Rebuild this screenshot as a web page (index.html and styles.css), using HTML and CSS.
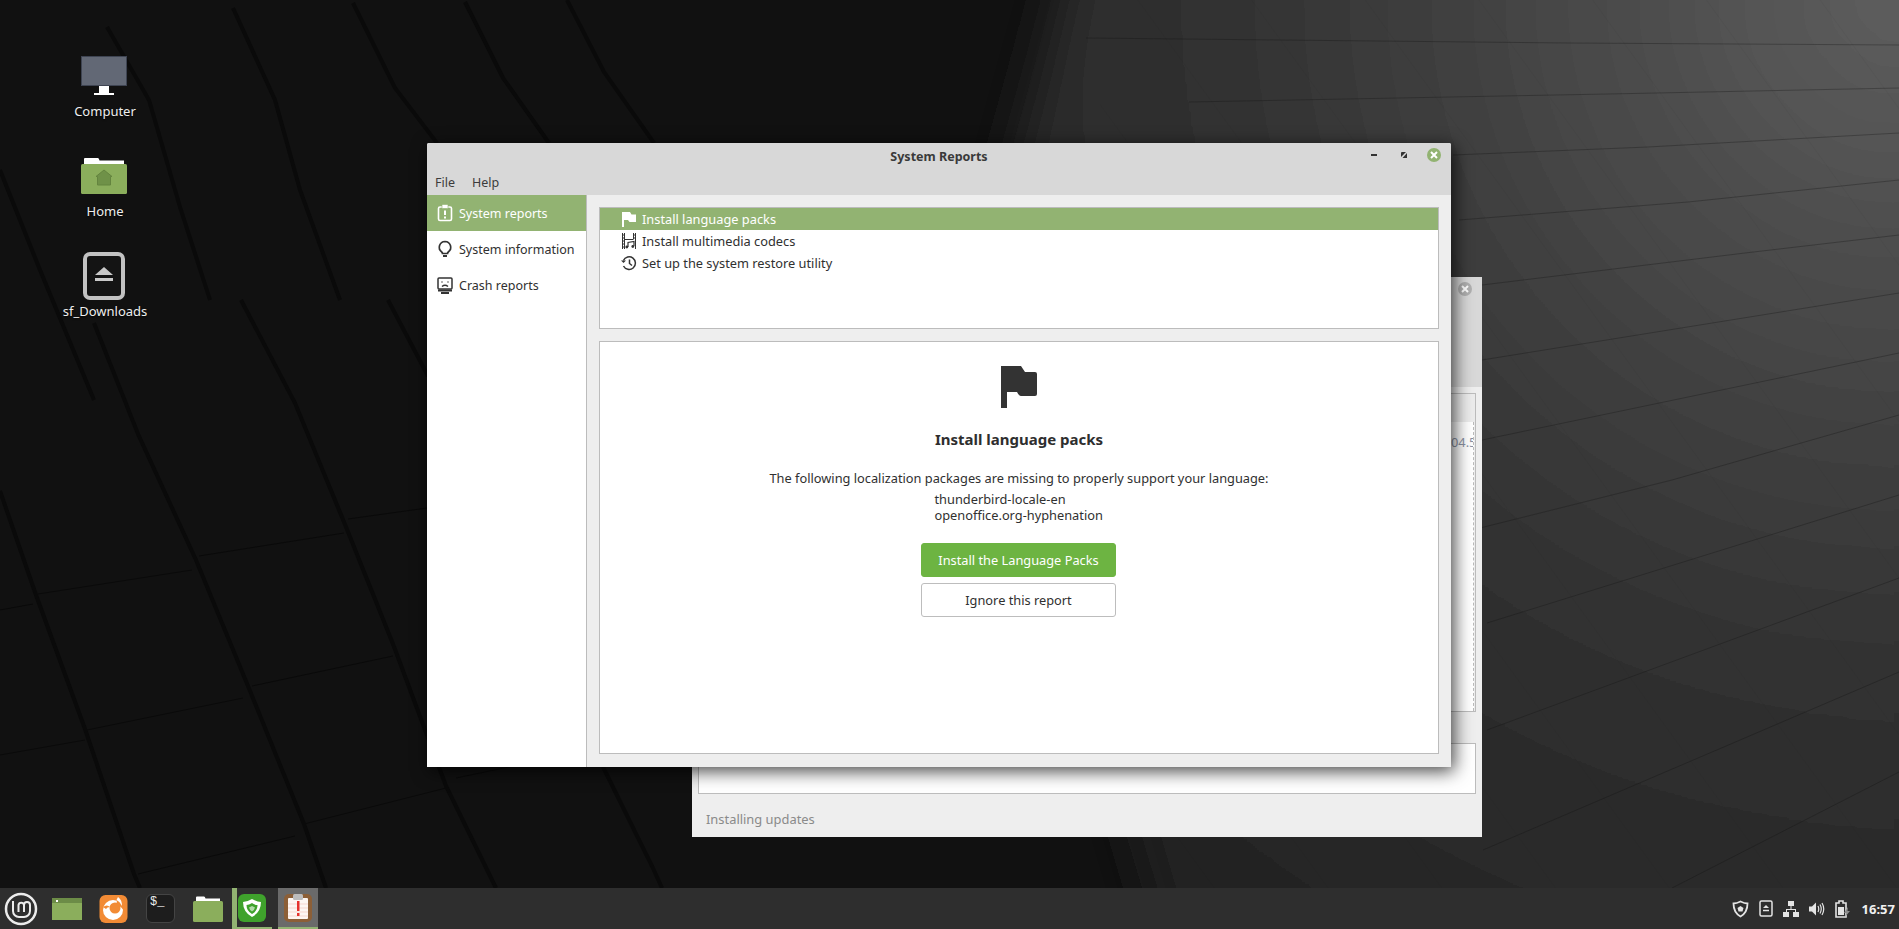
FILE: index.html
```html
<!DOCTYPE html>
<html lang="en">
<head>
  <meta charset="UTF-8" />
  <meta name="viewport" content="width=device-width, initial-scale=1.0" />
  <title>System Reports</title>
  <link rel="stylesheet" href="styles.css">
</head>
<body>
  <div class="desktop">
    <!-- wallpaper -->
    <svg class="wallpaper" viewBox="0 0 1899 929" aria-hidden="true">
      <defs>
        <radialGradient id="glow" gradientUnits="userSpaceOnUse" cx="1899" cy="0" r="1400">
          <stop offset="0" stop-color="#5e5e5e" />
          <stop offset="0.35" stop-color="#3d3d3d" />
          <stop offset="0.5" stop-color="#303030" />
          <stop offset="0.68" stop-color="#292929" />
          <stop offset="1" stop-color="#171717" />
        </radialGradient>
        <filter id="soft"><feGaussianBlur stdDeviation="24" /></filter>
        <pattern id="tiles" width="92" height="92" patternUnits="userSpaceOnUse" patternTransform="rotate(-36)">
          <line x1="0" y1="0" x2="0" y2="92" stroke="#000" stroke-opacity="0.07" />
        </pattern>
      </defs>
      <polygon points="1075,-60 1960,-60 1960,990 1180,990 975,300" fill="url(#glow)" filter="url(#soft)" />
      <rect x="1100" y="0" width="799" height="889" fill="url(#tiles)" />
      <g class="seams">
        <polyline points="1086,38 1568,43 1899,45" />
        <polyline points="1189,102 1608,94 1899,88" />
        <polyline points="1453,155 1648,147 1899,133" />
        <polyline points="1459,220 1688,202 1899,180" />
        <polyline points="1482,285 1745,253 1899,235" />
        <polyline points="1482,360 1899,293" />
        <polyline points="1482,440 1899,353" />
        <polyline points="1480,528 1672,480 1899,415" />
        <polyline points="1487,623 1899,495" />
        <polyline points="1487,730 1899,578" />
        <polyline points="1483,850 1899,672" />
        <polyline points="1672,888 1899,772" />
      </g>
      <g class="gaps">
        <polyline points="94,323 138,434 196,560 248,686 304,824 326,888" />
        <polyline points="241,300 295,403 344,522 393,644 446,786 496,888" />
        <polyline points="0,491 36,595 85,729 134,874 140,888" />
        <polyline points="388,300 428,376" />
        <polyline points="603,767 652,866 662,888" />
        <polyline points="107,27 149,100 180,207 210,300" />
        <polyline points="233,8 275,100 300,190 340,300" />
        <polyline points="353,3 395,88 437,143" />
        <polyline points="465,2 503,78 549,143" />
        <polyline points="567,0 604,72 654,143" />
        <polyline points="0,170 40,270 94,400" />
      </g>
      <g class="cracks">
        <polyline points="0,610 33,604" />
        <polyline points="38,594 192,570" />
        <polyline points="199,556 344,533" />
        <polyline points="348,519 427,508" />
        <polyline points="0,755 85,740" />
        <polyline points="87,730 243,698" />
        <polyline points="252,686 393,656" />
        <polyline points="304,824 446,788" />
        <polyline points="138,874 295,836" />
        <polyline points="456,778 600,748" />
      </g>
    </svg>

    <!-- desktop icons -->
    <div class="desktop-icons">
      <div class="desktop-icon">
        <svg class="icon-big" width="46" height="40" viewBox="0 0 46 40">
          <rect x="0.5" y="0.5" width="45" height="29" fill="#626875" stroke="#3e4452" />
          <rect x="18" y="30" width="10" height="7" fill="#fff" />
          <rect x="13" y="37" width="20" height="2" fill="#fff" />
        </svg>
        <span>Computer</span>
      </div>
      <div class="desktop-icon">
        <svg class="icon-big" width="46" height="38" viewBox="0 0 46 38">
          <path d="M3 6V2q0-1 1-1h13q1 0 1.500 2.500H43v4H3z" fill="#fff" />
          <rect x="0" y="7" width="46" height="30" rx="1.500" fill="#8bae5c" />
          <path d="M23 13l8 6.500h-1.500V28h-13v-8.500H15z" fill="#6f9148" stroke="#64843f" />
        </svg>
        <span>Home</span>
      </div>
      <div class="desktop-icon">
        <svg class="icon-big" width="42" height="48" viewBox="0 0 42 48">
          <rect x="2" y="2" width="38" height="44" rx="5" fill="#141414" stroke="#c2c2c2" stroke-width="4" />
          <path d="M21 15l9 8H12z" fill="#c9c9c9" />
          <rect x="12" y="26" width="18" height="3" fill="#c9c9c9" />
        </svg>
        <span>sf_Downloads</span>
      </div>
    </div>

    <!-- window behind -->
    <div class="window back-window">
      <div class="back-head">
        <span class="win-close grey">
          <svg width="8" height="8" viewBox="0 0 8 8"><path d="M1 1l6 6M7 1L1 7" stroke="#fff" stroke-width="2" /></svg>
        </span>
      </div>
      <div class="back-body">
        <div class="log-frame">
          <div class="log-top"></div>
          <div class="log-text">04.5</div>
        </div>
        <div class="term-frame"></div>
        <div class="back-status">Installing updates</div>
      </div>
    </div>

    <!-- system reports window -->
    <div class="window main-window">
      <div class="win-head">
        <div class="titlebar">
          <div class="title">System Reports</div>
          <div class="win-controls">
            <svg width="14" height="14" viewBox="0 0 14 14"><rect x="4" y="6" width="6" height="2" fill="#333" /></svg>
            <svg width="14" height="14" viewBox="0 0 14 14"><path d="M4 9V4.500L5 4h4zM10 5v5H5.500z" fill="#333" /><path d="M3.500 10.500l7-7" stroke="#d8d8d8" /></svg>
            <span class="win-close">
              <svg width="8" height="8" viewBox="0 0 8 8"><path d="M1 1l6 6M7 1L1 7" stroke="#fff" stroke-width="2" /></svg>
            </span>
          </div>
        </div>
        <div class="menubar">
          <span>File</span>
          <span>Help</span>
        </div>
      </div>
      <div class="win-body">
        <div class="sidebar">
          <div class="side-item selected">
            <svg width="16" height="18" viewBox="0 0 16 18" fill="none" stroke="#fff" stroke-width="1.600">
              <rect x="1.500" y="3" width="13" height="13.500" rx="1.500" />
              <rect x="5" y="0.500" width="6" height="4" fill="#fff" stroke="#92b372" stroke-width="0.600" />
              <path d="M8 6.500v4.500M8 12.500v2" stroke-width="2" />
            </svg>
            <span>System reports</span>
          </div>
          <div class="side-item">
            <svg width="16" height="18" viewBox="0 0 16 18" fill="none" stroke="#333" stroke-width="1.700">
              <path d="M8 1.500a5.800 5.800 0 0 1 3.300 10.500c-.6.500-.8 1-.8 1.500h-5c0-.5-.2-1-.8-1.500A5.800 5.800 0 0 1 8 1.500z" />
              <path d="M6 16h4" stroke-width="2" />
            </svg>
            <span>System information</span>
          </div>
          <div class="side-item">
            <svg width="16" height="18" viewBox="0 0 16 18" fill="none" stroke="#333" stroke-width="1.500">
              <rect x="1" y="2" width="14" height="11" rx="1" />
              <path d="M4 17h8" stroke-width="2" />
              <path d="M1 14.500h14" stroke-width="2" />
              <path d="M5 5.500v1M11 5.500v1M5 10.500q3-2.500 6 0" />
            </svg>
            <span>Crash reports</span>
          </div>
        </div>
        <div class="content">
          <div class="report-list">
            <div class="report-row selected">
              <svg width="16" height="16" viewBox="0 0 16 16"><path d="M1 1h8l1.500 2.500H15V11H8.500L7 9H3v7H1z" fill="#fff" /></svg>
              <span>Install language packs</span>
            </div>
            <div class="report-row">
              <svg width="16" height="18" viewBox="0 0 16 18" fill="none" stroke="#333">
                <path d="M1.500 1v16M14.500 1v16M1.500 3h2M1.500 6h2M1.500 9h2M1.500 12h2M1.500 15h2M12.500 3h2M12.500 6h2M3.500 1v16M12.500 1v6M3.500 7.500h9" />
                <path d="M7 15V10.500l6-1V14" stroke-width="1.200" />
                <circle cx="5.800" cy="15" r="1.400" fill="#333" stroke="none" />
                <circle cx="11.800" cy="14.500" r="1.400" fill="#333" stroke="none" />
              </svg>
              <span>Install multimedia codecs</span>
            </div>
            <div class="report-row">
              <svg width="16" height="16" viewBox="0 0 16 16" fill="none" stroke="#333" stroke-width="1.500">
                <path d="M2.400 5.500A6.300 6.300 0 1 1 2.500 11" />
                <path d="M0 5.500l2.500 2.500L5 5.500" fill="#333" stroke="none" />
                <path d="M8.500 4.500v4l2.500 2" />
              </svg>
              <span>Set up the system restore utility</span>
            </div>
          </div>
          <div class="report-panel">
            <svg class="report-flag" width="36" height="42" viewBox="0 0 36 42">
              <path d="M0 0h20l4 6h10q2 0 2 2v20q0 2-2 2H20q-2 0-4-4H6v16H0z" fill="#333" />
            </svg>
            <h2>Install language packs</h2>
            <p>The following localization packages are missing to properly support your language:</p>
            <div class="pkg-list">thunderbird-locale-en<br>openoffice.org-hyphenation</div>
            <button class="btn btn-green">Install the Language Packs</button>
            <button class="btn">Ignore this report</button>
          </div>
        </div>
      </div>
    </div>

    <!-- panel -->
    <div class="panel">
      <svg class="menu-logo" width="34" height="34" viewBox="0 0 34 34" fill="none" stroke="#ececec">
        <circle cx="17" cy="17" r="15" stroke-width="2.500" />
        <path d="M9 9v10a6 6 0 0 0 6 6h5a6 6 0 0 0 6-6v-6a3 3 0 0 0-6 0v7M14.500 20v-7a2.800 2.800 0 0 1 5.500 0" stroke-width="2" />
      </svg>
      <div class="launcher">
        <svg width="30" height="22" viewBox="0 0 30 22">
          <rect width="30" height="22" fill="#8bae5c" />
          <rect width="30" height="5" fill="#6c8c47" />
          <rect x="4" y="2" width="2" height="2" fill="#fff" />
        </svg>
      </div>
      <div class="launcher">
        <svg width="29" height="30" viewBox="0 0 29 30">
          <rect x="0.500" y="1" width="28" height="28" rx="6" fill="#f28b35" />
          <circle cx="14" cy="16" r="10" fill="#fff" />
          <circle cx="16" cy="14" r="5.500" fill="#f28b35" />
          <path d="M18 5q7 3 6.500 11-4-5-7-5z" fill="#f28b35" />
          <path d="M19 3q5 4 3.500 9-1-4-5-6z" fill="#fff" />
          <path d="M4 13q4-3 7 0-3 0-4 2z" fill="#f28b35" />
        </svg>
      </div>
      <div class="launcher">
        <div class="term-icon">$_</div>
      </div>
      <div class="launcher">
        <svg width="30" height="26" viewBox="0 0 30 26">
          <path d="M3 5V1.500q0-1 1-1h7q1 0 1.500 2H27v4H3z" fill="#fff" />
          <rect y="5" width="30" height="21" rx="1.500" fill="#8bae5c" />
        </svg>
      </div>
      <div class="launcher running">
        <svg width="28" height="28" viewBox="0 0 28 28">
          <rect width="28" height="28" rx="6" fill="#3fa22c" />
          <path d="M14 5q5 3 9 3 0 10-9 15Q5 18 5 8q4 0 9-3z" fill="#fff" />
          <path d="M14 9q3 2 5.500 2 0 6-5.500 9-5.500-3-5.500-9 2.500 0 5.500-2z" fill="#3fa22c" />
          <path d="M14 12l3 1.500q-.5 2.500-3 4-2.500-1.500-3-4z" fill="#fff" opacity="0.6" />
        </svg>
      </div>
      <div class="launcher running active">
        <svg width="28" height="30" viewBox="0 0 28 30">
          <rect y="1" width="28" height="28" rx="5" fill="#8c5f37" />
          <rect x="4" y="5" width="20" height="21" rx="1" fill="#fdf6f2" />
          <rect x="9" y="1" width="10" height="6" rx="1.500" fill="#bdbdbd" />
          <path d="M4 11h20M4 15h20M4 19h20M4 23h20" stroke="#f2c9c2" stroke-width="0.700" />
          <rect x="13" y="8" width="2.500" height="10" fill="#e5322d" />
          <rect x="13" y="20" width="2.500" height="3" fill="#e5322d" />
        </svg>
      </div>
      <div class="tray">
        <svg width="17" height="18" viewBox="0 0 17 18" fill="none" stroke="#e4e4e4" stroke-width="1.800">
          <path d="M8.500 1.500q4 2 7 2 0 9-7 13-7-4-7-13 3 0 7-2z" />
          <path d="M8.500 6l3 2-1 3.500h-4l-1-3.500z" fill="#e4e4e4" stroke="none" />
        </svg>
        <svg width="14" height="17" viewBox="0 0 14 17" fill="none" stroke="#e4e4e4" stroke-width="1.500">
          <rect x="1" y="1" width="12" height="15" rx="1.500" />
          <path d="M7 5l3 3H4z" fill="#e4e4e4" stroke="none" />
          <path d="M4 10.500h6" />
        </svg>
        <svg width="16" height="16" viewBox="0 0 16 16" fill="#e4e4e4">
          <rect x="5" y="0" width="6" height="5" />
          <rect x="0" y="11" width="6" height="5" />
          <rect x="10" y="11" width="6" height="5" />
          <path d="M7.500 5h1v3H13v3h-1V9H4v2H3V8h4.500z" />
        </svg>
        <svg width="16" height="16" viewBox="0 0 16 16" fill="none" stroke="#e4e4e4">
          <path d="M0 5.500h3l4-4v13l-4-4H0z" fill="#e4e4e4" stroke="none" />
          <path d="M9 5q1.500 3 0 6M11 3.500q2.500 4.500 0 9M13 2q3.500 6 0 12" stroke-width="1.200" />
        </svg>
        <svg width="17" height="18" viewBox="0 0 17 18">
          <path d="M1 3h3V1h4v2h3v14H1z" fill="none" stroke="#e4e4e4" stroke-width="1.600" />
          <rect x="3" y="7" width="6" height="8" fill="#e4e4e4" />
          <path d="M13 7l-4 6h2.500L10 17l5-6h-2.500z" fill="#8c8c8c" />
        </svg>
        <div class="clock">16:57</div>
      </div>
    </div>
  </div>
</body>
</html>
```

FILE: styles.css
```css
* {
  box-sizing: border-box;
}

body {
  margin: 0;
  font-family: "Noto Sans", "Open Sans", sans-serif;
  font-size: 12.8px;
  color: #303030;
  background-color: #111;
  overflow: hidden;
}

svg {
  display: block;
  flex: none;
}

.desktop {
  position: relative;
  width: 1899px;
  height: 929px;
  overflow: hidden;
  display: flex;
  flex-direction: column;
  justify-content: flex-end;
}

.wallpaper {
  position: absolute;
  left: 0;
  top: 0;
  width: 1899px;
  height: 929px;
}

.seams polyline {
  fill: none;
  stroke: #111;
  stroke-opacity: 0.3;
}

.gaps polyline {
  fill: none;
  stroke: #0a0a0a;
  stroke-width: 4;
}

.cracks polyline {
  fill: none;
  stroke: #0a0a0a;
  stroke-width: 1;
}

/* desktop icons */
.desktop-icons {
  position: absolute;
  left: 50px;
  top: 52px;
  width: 110px;
  display: flex;
  flex-direction: column;
}

.desktop-icon {
  height: 100px;
  display: flex;
  flex-direction: column;
  align-items: center;
  font-size: 13px;
  color: #eee;
  text-shadow: 0 1px 2px #000;
}

.desktop-icon:nth-child(1) .icon-big {
  margin: 4px 0 4px -2px;
}

.desktop-icon:nth-child(2) .icon-big {
  margin: 5px 0 5px -2px;
}

.desktop-icon:nth-child(3) .icon-big {
  margin: 0 0 0 -2px;
}

.desktop-icon span {
  height: 16px;
  line-height: 16px;
  margin-top: 3px;
}

/* windows */
.window {
  position: absolute;
  display: flex;
  flex-direction: column;
  border-radius: 2px 2px 0 0;
}

.main-window {
  left: 427px;
  top: 143px;
  width: 1024px;
  height: 624px;
  background: #eee;
  box-shadow: 3px 4px 18px rgba(0, 0, 0, 0.75);
}

.back-window {
  left: 692px;
  top: 277px;
  width: 790px;
  height: 560px;
  background: #eee;
}

.back-head {
  height: 110px;
  background: #d8d8d8;
  display: flex;
  justify-content: flex-end;
  padding: 5px 10px 0 0;
}

.back-body {
  flex: 1;
  padding: 6px 6px 0 6px;
  display: flex;
  flex-direction: column;
}

.log-frame {
  height: 319px;
  border: 1px solid #bcbcbc;
  display: flex;
  flex-direction: column;
}

.log-top {
  height: 28px;
  background: #ececec;
}

.log-text {
  flex: 1;
  background: #fff;
  padding: 11px 0 0 752px;
  margin-right: 1px;
  font-size: 12.8px;
  line-height: 18px;
  color: #8b93a5;
  overflow: hidden;
  white-space: nowrap;
  border-right: 1px dashed #bbb;
}

.term-frame {
  height: 51px;
  margin-top: 31px;
  background: #fff;
  border: 1px solid #bcbcbc;
}

.back-status {
  flex: 1;
  display: flex;
  align-items: center;
  padding: 7px 0 0 8px;
  font-size: 12.9px;
  color: #8a8a8a;
}

.win-close {
  width: 14px;
  height: 14px;
  border-radius: 50%;
  background: #92b372;
  display: flex;
  align-items: center;
  justify-content: center;
}

.win-close.grey {
  background: #b0b0b0;
}

.win-head {
  height: 52px;
  background: #d8d8d8;
  border-radius: 2px 2px 0 0;
}

.titlebar {
  height: 27px;
  display: flex;
  align-items: center;
  justify-content: center;
  position: relative;
}

.title {
  font-size: 12.5px;
  font-weight: 700;
  color: #3a3a3a;
}

.win-controls {
  position: absolute;
  right: 10px;
  top: 5px;
  display: flex;
  gap: 16px;
}

.menubar {
  height: 24px;
  display: flex;
  align-items: center;
  gap: 17px;
  padding-left: 8px;
  font-size: 12.5px;
  color: #3c3c3c;
}

.win-body {
  flex: 1;
  display: flex;
  min-height: 0;
}

.sidebar {
  width: 160px;
  background: #fff;
  border-right: 1px solid #bcbcbc;
  font-size: 12.5px;
}

.side-item {
  height: 36px;
  display: flex;
  align-items: center;
  gap: 6px;
  padding-left: 10px;
}

.side-item.selected,
.report-row.selected {
  background: #92b372;
  color: #fff;
}

.content {
  flex: 1;
  padding: 12px 12px 13px;
  display: flex;
  flex-direction: column;
  gap: 12px;
}

.report-list {
  height: 122px;
  background: #fff;
  border: 1px solid #bcbcbc;
}

.report-row {
  height: 22px;
  display: flex;
  align-items: center;
  gap: 5px;
  padding-left: 21px;
}

.report-panel {
  flex: 1;
  background: #fff;
  border: 1px solid #bcbcbc;
  display: flex;
  flex-direction: column;
  align-items: center;
  padding-top: 24px;
}

.report-flag {
  margin-bottom: 21px;
}

.report-panel h2 {
  margin: 0 0 20px;
  font-size: 15px;
  line-height: 20px;
  font-weight: 700;
  color: #2e2e2e;
}

.report-panel p {
  margin: 0 0 4px;
  line-height: 18px;
}

.pkg-list {
  width: 169px;
  line-height: 16px;
  margin-bottom: 20px;
}

.btn {
  width: 195px;
  height: 34px;
  margin: 0 1px 6px 0;
  font: inherit;
  color: #303030;
  background: #fff;
  border: 1px solid #bdbdbd;
  border-radius: 3px;
}

.btn-green {
  background: #6db442;
  border-color: #6db442;
  color: #fff;
}

/* panel */
.panel {
  position: relative;
  height: 41px;
  background: #2e2e2e;
  display: flex;
  align-items: center;
}

.menu-logo {
  margin: 0 5px 0 4px;
}

.launcher {
  width: 47px;
  height: 41px;
  display: flex;
  align-items: center;
  justify-content: center;
}

.launcher.running {
  width: 40px;
  border-bottom: 2px solid #92b372;
}

.launcher.running:not(.active) {
  border-left: 5px solid #92b372;
  margin-left: 1px;
  justify-content: flex-start;
  padding-left: 1px;
}

.launcher.active {
  background: #6a6a6a;
  margin-left: 6px;
}

.term-icon {
  width: 29px;
  height: 29px;
  border-radius: 6px;
  background: #1d1d1d;
  border: 1px solid #444;
  color: #eee;
  font-family: "Liberation Mono", monospace;
  font-size: 12px;
  line-height: 13px;
  padding: 1px 0 0 3px;
}

.tray {
  margin-left: auto;
  display: flex;
  align-items: center;
  gap: 10px;
  padding-right: 4px;
}

.clock {
  font-weight: 700;
  font-size: 13px;
  color: #f0f0f0;
}
```
